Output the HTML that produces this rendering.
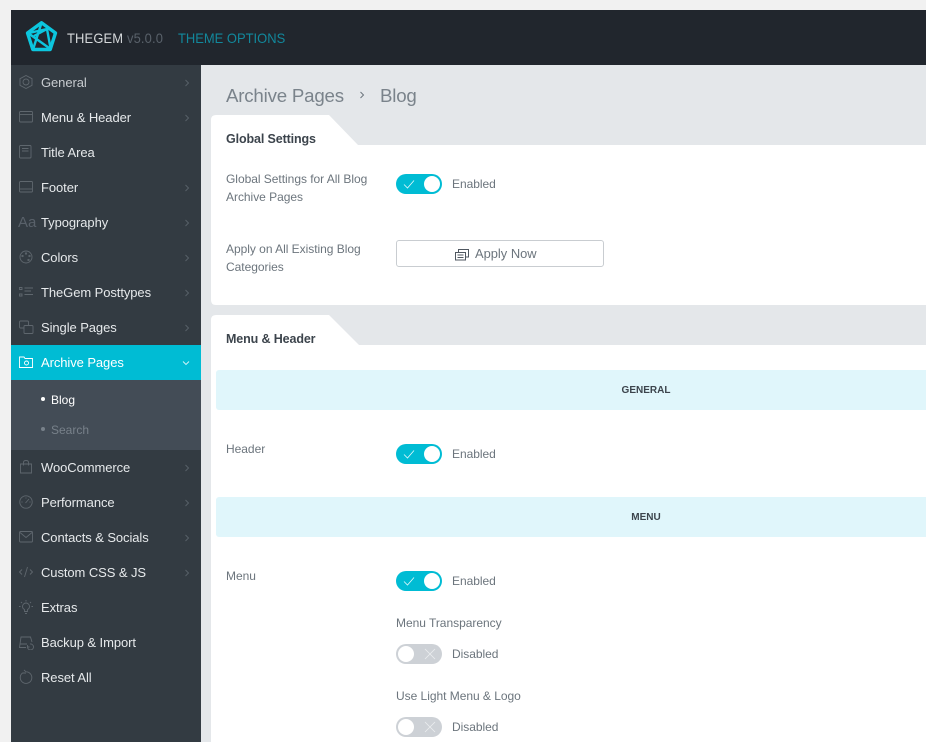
<!DOCTYPE html>
<html><head><meta charset="utf-8"><style>
html,body{margin:0;padding:0;width:926px;height:742px;overflow:hidden;background:#f1f1f1;font-family:"Liberation Sans",sans-serif}
div,span,svg{position:absolute}
.t{white-space:nowrap;line-height:16px}
.hd{left:11px;top:10px;width:915px;height:55px;background:#21262d}
.side{left:11px;top:65px;width:190px;height:677px;background:#333b42}
.main{left:201px;top:65px;width:725px;height:677px;background:#e4e7ea}
.m{left:41px;margin-top:1px;font-size:13px;color:#e6e9eb;letter-spacing:-.08px}
.ic{left:18px;margin-top:-1px;width:16px;height:16px;fill:none;stroke:#5f676e;stroke-width:.9}
.ar{left:184px;margin-top:0;width:6px;height:8px;fill:none;stroke:#59626a;stroke-width:.9}
.lab{font-size:12px;color:#6c757d;letter-spacing:-.03px}
.sec{font-size:12.5px;font-weight:bold;color:#3c444c;letter-spacing:-.12px}
.tg{left:396px;width:46px;height:20px;border-radius:10px;background:#00bcd4}
.tg.off{background:#cdd1d6}
.tg i{position:absolute;width:16px;height:16px;border-radius:50%;background:#fff;top:2px;left:28px}
.tg.off i{left:2px}
.tg svg{left:7px;top:4px;width:12px;height:12px;fill:none;stroke:#e4f9fc;stroke-width:.8}
.tg.off svg{left:28px;stroke:#eceef0}
.band{left:216px;width:860px;height:40px;background:#e0f6fb;border-radius:3px 0 0 3px;text-align:center}
.band span{position:static;font-size:10px;font-weight:bold;color:#3c444c;line-height:41px}
</style></head><body>
<div class="hd"></div>
<svg style="left:25px;top:20px" width="33" height="33" viewBox="0 0 33 33" fill="none" stroke="#0cc6de" stroke-linejoin="round"><path d="M16.500 2.800L30.500 13L25.200 29.500H7.800L2.500 13Z" stroke-width="3.400"/><path d="M16.500 3L8.500 28M3 13L25.500 29M4 13L22 9L25.500 28M9 16L22 9" stroke-width="2.400"/></svg>
<div class="t" style="left:67px;top:30px;font-size:14px;color:#d5d8da;letter-spacing:.15px;transform:scaleX(.925);transform-origin:0 0">THEGEM <span style="position:static;color:#59616a">v5.0.0</span></div>
<div class="t" style="left:178px;top:30px;font-size:14px;color:#12889c;transform:scaleX(.925);transform-origin:0 0">THEME OPTIONS</div>

<div class="side"></div>
<div style="left:11px;top:345px;width:190px;height:35px;background:#00bcd4"></div>
<div style="left:11px;top:380px;width:190px;height:70px;background:#434c56"></div>

<div class="t m" style="top:74px;color:#c8ccd0">General</div>
<div class="t m" style="top:109px">Menu &amp; Header</div>
<div class="t m" style="top:144px">Title Area</div>
<div class="t m" style="top:179px">Footer</div>
<div class="t m" style="top:214px">Typography</div>
<div class="t m" style="top:249px">Colors</div>
<div class="t m" style="top:284px">TheGem Posttypes</div>
<div class="t m" style="top:319px">Single Pages</div>
<div class="t m" style="top:354px;color:#fff">Archive Pages</div>
<div class="t" style="left:51px;top:392px;font-size:12px;color:#fff">Blog</div>
<div class="t" style="left:51px;top:422px;font-size:12px;color:#78818a">Search</div>
<div style="left:41px;top:397px;width:4px;height:4px;border-radius:50%;background:#fff"></div>
<div style="left:41px;top:427px;width:4px;height:4px;border-radius:50%;background:#78818a"></div>
<div class="t m" style="top:459px">WooCommerce</div>
<div class="t m" style="top:494px">Performance</div>
<div class="t m" style="top:529px">Contacts &amp; Socials</div>
<div class="t m" style="top:564px">Custom CSS &amp; JS</div>
<div class="t m" style="top:599px">Extras</div>
<div class="t m" style="top:634px">Backup &amp; Import</div>
<div class="t m" style="top:669px">Reset All</div>

<svg class="ic" style="top:75px" viewBox="0 0 16 16"><path d="M8 1.500L14 4.700V11.300L8 14.500L2 11.300V4.700Z"/><circle cx="8" cy="8" r="3"/></svg>
<svg class="ic" style="top:110px" viewBox="0 0 16 16"><rect x="1.500" y="2.500" width="13" height="10.500" rx="1"/><path d="M1.500 5.500H14.500"/></svg>
<svg class="ic" style="top:145px" viewBox="0 0 16 16"><rect x="1.500" y="1.500" width="11.500" height="12.500" rx="1"/><path d="M4 4.500H10.500M4 7H10.500"/></svg>
<svg class="ic" style="top:180px" viewBox="0 0 16 16"><rect x="1.500" y="2.500" width="13" height="10.500" rx="1"/><path d="M1.500 10H14.500"/></svg>
<div class="t" style="left:18px;top:215px;font-size:15px;color:#59616a">Aa</div>
<svg class="ic" style="top:250px" viewBox="0 0 16 16"><circle cx="8" cy="8" r="6"/><circle cx="8" cy="4.500" r=".7"/><circle cx="4.500" cy="7" r=".7"/><circle cx="11.500" cy="7" r=".7"/><circle cx="10.500" cy="11" r=".7"/></svg>
<svg class="ic" style="top:285px" viewBox="0 0 16 16"><path d="M1.500 3.500H4V5.500H1.500ZM1.500 10H4V12H1.500ZM6.500 4H15M6.500 7H13M6.500 10.500H15"/></svg>
<svg class="ic" style="top:320px" viewBox="0 0 16 16"><rect x="1.500" y="2" width="9" height="7" rx="1"/><rect x="6" y="6.500" width="9" height="8" rx="1" fill="#333b42"/></svg>
<svg class="ic" style="top:355px;stroke:#fff" viewBox="0 0 16 16"><path d="M1.500 13.500V3H6L7 4.500H14.500V13.500Z"/><circle cx="8.500" cy="9" r="2"/></svg>
<svg class="ic" style="top:460px" viewBox="0 0 16 16"><path d="M2.500 5H13.500V14H2.500ZM5.500 6.500V3.500Q5.500 1.500 8 1.500T10.500 3.500V6.500"/></svg>
<svg class="ic" style="top:495px" viewBox="0 0 16 16"><circle cx="8" cy="8" r="6.200"/><path d="M7.500 9L11 5M3.500 8H4.500M11.500 8H12.500M8 3.500V4.500"/></svg>
<svg class="ic" style="top:530px" viewBox="0 0 16 16"><rect x="1.500" y="2.500" width="13" height="10.500" rx="1"/><path d="M2 3.500L8 8.500L14 3.500"/></svg>
<svg class="ic" style="top:565px" viewBox="0 0 16 16"><path d="M4 5.500L1.500 8L4 10.500M12 5.500L14.500 8L12 10.500M9.500 3L6.500 13"/></svg>
<svg class="ic" style="top:600px" viewBox="0 0 16 16"><path d="M6.500 12.500V10.500Q4.500 9.500 4.500 7.500A3.500 3.500 0 0 1 11.500 7.500Q11.500 9.500 9.500 10.500V12.500ZM7 14.500H9M1 7.500H2.500M13.500 7.500H15M3 3L4 4M13 3L12 4M8 1V2.500"/></svg>
<svg class="ic" style="top:635px" viewBox="0 0 16 16"><path d="M8 13.500H1.500L3 3H12.500L14 8M2 10H9M12 10A3 3 0 1 1 9.500 13M9.500 11V13H11.500"/></svg>
<svg class="ic" style="top:670px" viewBox="0 0 16 16"><path d="M4.500 4A5.800 5.800 0 1 0 8 2.800M8 2.800L6 1M4.500 4H8"/></svg>

<svg class="ar" style="top:79px" viewBox="0 0 6 8"><path d="M1.500 1L4.500 4L1.500 7"/></svg>
<svg class="ar" style="top:114px" viewBox="0 0 6 8"><path d="M1.500 1L4.500 4L1.500 7"/></svg>
<svg class="ar" style="top:184px" viewBox="0 0 6 8"><path d="M1.500 1L4.500 4L1.500 7"/></svg>
<svg class="ar" style="top:219px" viewBox="0 0 6 8"><path d="M1.500 1L4.500 4L1.500 7"/></svg>
<svg class="ar" style="top:254px" viewBox="0 0 6 8"><path d="M1.500 1L4.500 4L1.500 7"/></svg>
<svg class="ar" style="top:289px" viewBox="0 0 6 8"><path d="M1.500 1L4.500 4L1.500 7"/></svg>
<svg class="ar" style="top:324px" viewBox="0 0 6 8"><path d="M1.500 1L4.500 4L1.500 7"/></svg>
<svg class="ar" style="top:464px" viewBox="0 0 6 8"><path d="M1.500 1L4.500 4L1.500 7"/></svg>
<svg class="ar" style="top:499px" viewBox="0 0 6 8"><path d="M1.500 1L4.500 4L1.500 7"/></svg>
<svg class="ar" style="top:534px" viewBox="0 0 6 8"><path d="M1.500 1L4.500 4L1.500 7"/></svg>
<svg class="ar" style="top:569px" viewBox="0 0 6 8"><path d="M1.500 1L4.500 4L1.500 7"/></svg>
<svg style="left:182px;top:360px;fill:none;stroke:#d8f5f9;stroke-width:.9" width="8" height="6" viewBox="0 0 8 6"><path d="M1 1.500L4 4.500L7 1.500"/></svg>

<div class="main"></div>
<div class="t" style="left:226px;top:85px;font-size:18.700px;line-height:22px;color:#7a838b;letter-spacing:-.2px">Archive Pages</div>
<svg style="left:359px;top:91px;fill:none;stroke:#6c757d" width="6" height="8" viewBox="0 0 6 8"><path d="M1.500 1L4.500 4L1.500 7"/></svg>
<div class="t" style="left:380px;top:85px;font-size:18.700px;line-height:22px;color:#7a838b;letter-spacing:-.2px">Blog</div>

<svg style="left:211px;top:115px" width="715" height="190" viewBox="0 0 715 190"><path d="M0 185V5Q0 0 5 0H118L147 30H715V190H5Q0 190 0 185Z" fill="#fff"/></svg>
<svg style="left:211px;top:315px" width="715" height="427" viewBox="0 0 715 427"><path d="M0 427V5Q0 0 5 0H118L148 30H715V427Z" fill="#fff"/></svg>

<div class="t sec" style="left:226px;top:131px">Global Settings</div>
<div class="t lab" style="left:226px;top:170px;line-height:18px">Global Settings for All Blog<br>Archive Pages</div>
<div class="tg" style="top:174px"><svg viewBox="0 0 12 12"><path d="M1 6.500L4.500 10L11 2.500"/></svg><i></i></div>
<div class="t lab" style="left:452px;top:176px">Enabled</div>
<div class="t lab" style="left:226px;top:240px;line-height:18px">Apply on All Existing Blog<br>Categories</div>
<div style="left:396px;top:240px;width:206px;height:25px;border:1px solid #c9cdd1;border-radius:3px;background:#fff"></div>
<svg style="left:455px;top:248px;fill:#fff;stroke:#4f5760" width="14" height="13" viewBox="0 0 14 13"><rect x="3.500" y="1.500" width="10" height="7.500"/><rect x=".5" y="4.500" width="10" height="7.500"/><path d="M2.500 7H8.500M2.500 9.500H8.500"/></svg>
<div class="t" style="left:475px;top:246px;font-size:12.900px;color:#6c757d">Apply Now</div>

<div class="t sec" style="left:226px;top:331px">Menu &amp; Header</div>
<div class="band" style="top:370px"><span>GENERAL</span></div>
<div class="t lab" style="left:226px;top:441px">Header</div>
<div class="tg" style="top:444px"><svg viewBox="0 0 12 12"><path d="M1 6.500L4.500 10L11 2.500"/></svg><i></i></div>
<div class="t lab" style="left:452px;top:446px">Enabled</div>
<div class="band" style="top:497px"><span>MENU</span></div>
<div class="t lab" style="left:226px;top:568px">Menu</div>
<div class="tg" style="top:571px"><svg viewBox="0 0 12 12"><path d="M1 6.500L4.500 10L11 2.500"/></svg><i></i></div>
<div class="t lab" style="left:452px;top:573px">Enabled</div>
<div class="t lab" style="left:396px;top:615px">Menu Transparency</div>
<div class="tg off" style="top:644px"><svg viewBox="0 0 12 12"><path d="M1 1L11 11M11 1L1 11"/></svg><i></i></div>
<div class="t lab" style="left:452px;top:646px">Disabled</div>
<div class="t lab" style="left:396px;top:688px">Use Light Menu &amp; Logo</div>
<div class="tg off" style="top:717px"><svg viewBox="0 0 12 12"><path d="M1 1L11 11M11 1L1 11"/></svg><i></i></div>
<div class="t lab" style="left:452px;top:719px">Disabled</div>
</body></html>
